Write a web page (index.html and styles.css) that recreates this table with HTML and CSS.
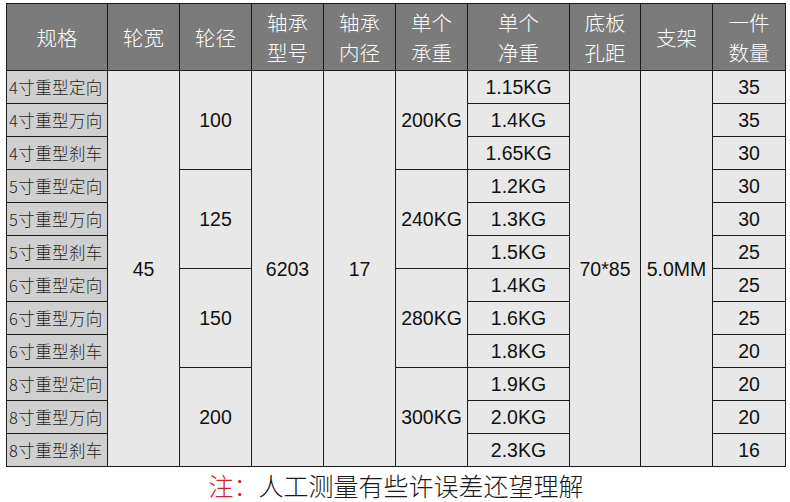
FILE: index.html
```html
<!DOCTYPE html>
<html lang="zh-CN">
<head>
<meta charset="utf-8">
<link rel="stylesheet" href="styles.css">
</head>
<body>
<div class="wrap">
<table class="spec">
<colgroup>
<col class="c1"><col class="c2"><col class="c3"><col class="c4"><col class="c5"><col class="c6"><col class="c7"><col class="c8"><col class="c9"><col class="c10">
</colgroup>
<thead>
<tr class="head">
<th>规格</th><th>轮宽</th><th>轮径</th><th>轴承<br>型号</th><th>轴承<br>内径</th><th>单个<br>承重</th><th>单个<br>净重</th><th>底板<br>孔距</th><th>支架</th><th>一件<br>数量</th>
</tr>
</thead>
<tbody>
<tr><td class="name">4寸重型定向</td><td rowspan="12">45</td><td rowspan="3">100</td><td rowspan="12">6203</td><td rowspan="12">17</td><td rowspan="3">200KG</td><td>1.15KG</td><td rowspan="12">70*85</td><td rowspan="12">5.0MM</td><td>35</td></tr>
<tr><td class="name">4寸重型万向</td><td>1.4KG</td><td>35</td></tr>
<tr><td class="name">4寸重型刹车</td><td>1.65KG</td><td>30</td></tr>
<tr><td class="name">5寸重型定向</td><td rowspan="3">125</td><td rowspan="3">240KG</td><td>1.2KG</td><td>30</td></tr>
<tr><td class="name">5寸重型万向</td><td>1.3KG</td><td>30</td></tr>
<tr><td class="name">5寸重型刹车</td><td>1.5KG</td><td>25</td></tr>
<tr><td class="name">6寸重型定向</td><td rowspan="3">150</td><td rowspan="3">280KG</td><td>1.4KG</td><td>25</td></tr>
<tr><td class="name">6寸重型万向</td><td>1.6KG</td><td>25</td></tr>
<tr><td class="name">6寸重型刹车</td><td>1.8KG</td><td>20</td></tr>
<tr><td class="name">8寸重型定向</td><td rowspan="3">200</td><td rowspan="3">300KG</td><td>1.9KG</td><td>20</td></tr>
<tr><td class="name">8寸重型万向</td><td>2.0KG</td><td>20</td></tr>
<tr><td class="name">8寸重型刹车</td><td>2.3KG</td><td>16</td></tr>
</tbody>
</table>
<p class="note"><span class="red">注：</span>人工测量有些许误差还望理解</p>
</div>
</body>
</html>
```
FILE: styles.css
```css
html, body {
  margin: 0;
  padding: 0;
  background: #ffffff;
}
.wrap {
  padding: 3px 0 0 6px;
  width: 780px;
}
.spec {
  border-collapse: collapse;
  table-layout: fixed;
  width: 780px;
  font-family: "Liberation Sans", Arial, "Noto Sans CJK SC", sans-serif;
}
.c1 { width: 101px; }
.c2 { width: 72px; }
.c3 { width: 72px; }
.c4 { width: 72px; }
.c5 { width: 72px; }
.c6 { width: 72px; }
.c7 { width: 102px; }
.c8 { width: 71px; }
.c9 { width: 72px; }
.c10 { width: 73px; }
.spec th, .spec td {
  border: 1px solid #1a1a1a;
  padding: 0;
  text-align: center;
  vertical-align: middle;
}
.head th {
  height: 66px;
  background: #7b7b7b;
  color: #ffffff;
  font-family: "Noto Sans CJK SC", sans-serif;
  font-weight: 300;
  font-size: 20.5px;
  line-height: 30px;
}
.spec td {
  height: 32px;
  background: #e8e8e8;
  color: #111111;
  font-size: 19.5px;
  line-height: 32px;
}
.spec td.name {
  background: #d0d0d0;
  text-align: left;
  padding-left: 2px;
  font-family: "Noto Sans CJK SC", sans-serif;
  font-size: 16.5px;
  letter-spacing: 0.4px;
  font-weight: 300;
  color: #1e1e1e;
  white-space: nowrap;
}
.note {
  margin: 0;
  text-align: center;
  font-family: "Noto Sans CJK SC", sans-serif;
  font-size: 25px;
  line-height: 36px;
  color: #1a1a1a;
  font-weight: 300;
}
.red {
  color: #d0202a;
}
```
